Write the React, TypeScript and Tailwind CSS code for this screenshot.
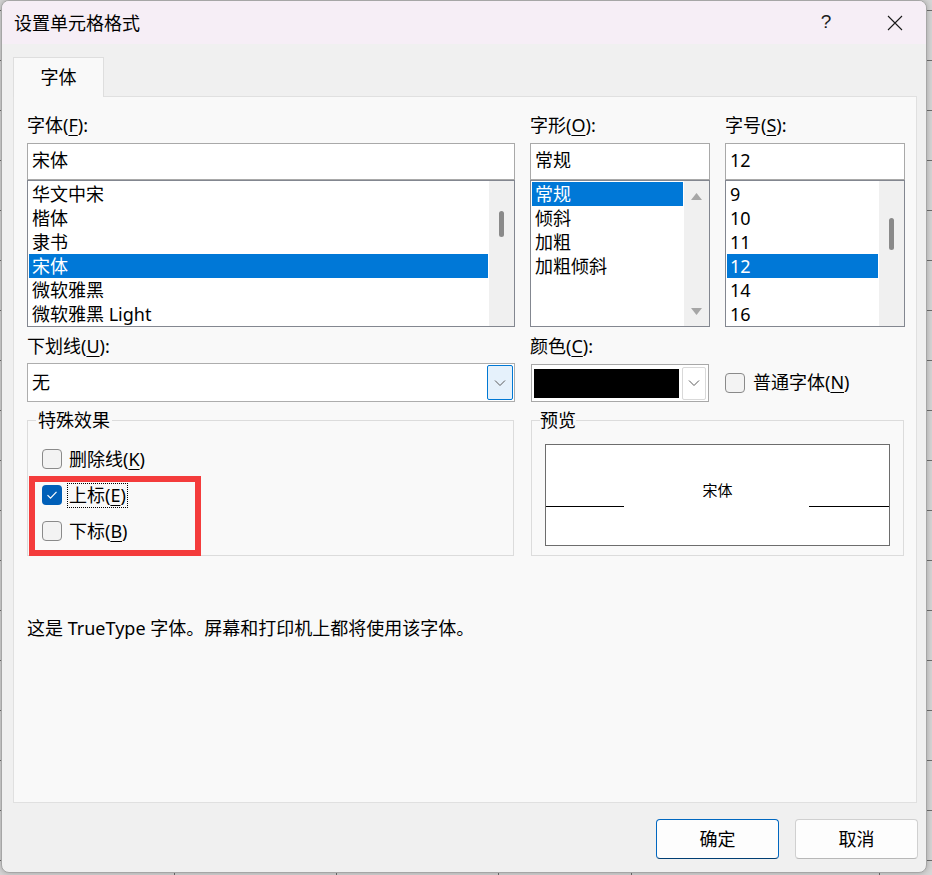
import React from 'react';

type ListProps = {
  items: string[];
  selected: number;
  thumb?: { top: string; height: string };
};

// worksheet grid behind the dialog
const gridCols = [174, 336, 498, 631, 879];
const gridRows = Array.from({ length: 18 }, (_, i) => 10 + i * 50);

const Chevron = () => (
  <svg width="12" height="8" viewBox="0 0 12 8" fill="none">
    <path d="M1 1.5l5 5 5-5" stroke="#5a5a5a" strokeWidth="1" />
  </svg>
);

const Check = ({ checked = false }: { checked?: boolean }) =>
  checked ? (
    <span className="flex h-[20px] w-[20px] shrink-0 items-center justify-center rounded-[4px] bg-[#005fb8]">
      <svg width="12" height="10" viewBox="0 0 12 10" fill="none">
        <path d="M1.5 5.2l3 3 6-6.4" stroke="#ffffff" strokeWidth="1.2" />
      </svg>
    </span>
  ) : (
    <span className="h-[20px] w-[20px] shrink-0 rounded-[4px] border border-[#8a8a8a] bg-[#f3f3f3]" />
  );

const Key = ({ k }: { k: string }) => (
  <>
    (<span className="underline decoration-1 underline-offset-[3px]">{k}</span>)
  </>
);

const ListBox: React.FC<ListProps> = ({ items, selected, thumb }) => (
  <div className="flex h-[147px] border border-[#838790] bg-white">
    <div className="flex-1 px-[1px] pt-[1px]">
      {items.map((item, i) => (
        <div
          key={item}
          className={
            i === selected
              ? 'h-[24px] bg-[#0078d7] pl-[3px] leading-[24px] text-white'
              : 'h-[24px] pl-[3px] leading-[24px] text-black'
          }
        >
          {item}
        </div>
      ))}
    </div>
    {thumb ? (
      <div className="flex w-[25px] justify-center bg-[#f0f0f0]">
        <div className={`w-[5px] rounded-full bg-[#8a8a8a] ${thumb.top} ${thumb.height}`} />
      </div>
    ) : (
      <div className="flex w-[25px] flex-col items-center justify-between bg-[#f0f0f0] pt-[12px] pb-[11px]">
        <svg width="11" height="7" viewBox="0 0 11 7">
          <path d="M0 7L5.5 0 11 7z" fill="#a6a6a6" />
        </svg>
        <svg width="11" height="7" viewBox="0 0 11 7">
          <path d="M0 0h11L5.5 7z" fill="#a6a6a6" />
        </svg>
      </div>
    )}
  </div>
);

export default function App() {
  return (
    <div className="relative h-[875px] w-[932px] overflow-hidden bg-[#d6d6d6] font-['Noto_Sans','Noto_Sans_CJK_SC',sans-serif] text-[18px] text-black">
      {gridCols.map(x => (
        <div key={`c${x}`} className="absolute top-0 h-full w-px bg-[#6e6e6e]" style={{ left: x }} />
      ))}
      {gridRows.map(y => (
        <div key={`r${y}`} className="absolute left-0 h-px w-full bg-[#6e6e6e]" style={{ top: y }} />
      ))}

      <div className="absolute top-0 left-[1px] flex h-[873px] w-[926px] flex-col overflow-hidden rounded-[8px] border border-[#a6a6a6] bg-[#f0f0f0] shadow-[0_0_6px_rgba(0,0,0,0.25)]">
        {/* title bar */}
        <div className="flex h-[43px] shrink-0 items-center bg-[#f6eef6] pl-[12px]">
          <span className="leading-[24px]">设置单元格格式</span>
          <div className="ml-auto flex items-center gap-[7px]">
            <span className="w-[62px] text-center font-['Liberation_Sans',sans-serif] text-[19px] font-light text-[#1c1c1c]">?</span>
            <span className="flex w-[62px] justify-center">
              <svg width="16" height="16" viewBox="0 0 16 16" fill="none">
                <path d="M1 1l14 14M15 1L1 15" stroke="#1a1a1a" strokeWidth="1.1" />
              </svg>
            </span>
          </div>
        </div>

        <div className="flex flex-1 flex-col pt-[13px] pr-[9px] pl-[11px]">
          {/* tab strip */}
          <div className="relative z-10 -mb-px flex h-[40px] w-[91px] items-center justify-center border-x border-t border-[#dedede] bg-[#f9f9f9]">
            字体
          </div>

          {/* font page */}
          <div className="relative h-[707px] border border-[#e0e0e0] bg-[#f9f9f9] pt-[16px] pl-[13px]">
            <div className="grid grid-cols-[488px_180px_180px] gap-x-[15px]">
              <div>
                <div className="h-[24px] leading-[24px]">字体<Key k="F" />:</div>
                <div className="mt-[6px] h-[37px] border border-[#a9a9a9] bg-white pl-[4px] leading-[33px]">宋体</div>
                <ListBox
                  items={['华文中宋', '楷体', '隶书', '宋体', '微软雅黑', '微软雅黑 Light']}
                  selected={3}
                  thumb={{ top: 'mt-[30px]', height: 'h-[26px]' }}
                />
              </div>
              <div>
                <div className="h-[24px] leading-[24px]">字形<Key k="O" />:</div>
                <div className="mt-[6px] h-[37px] border border-[#a9a9a9] bg-white pl-[4px] leading-[33px]">常规</div>
                <ListBox items={['常规', '倾斜', '加粗', '加粗倾斜']} selected={0} />
              </div>
              <div>
                <div className="h-[24px] leading-[24px]">字号<Key k="S" />:</div>
                <div className="mt-[6px] h-[37px] border border-[#a9a9a9] bg-white pl-[4px] leading-[33px]">12</div>
                <ListBox
                  items={['9', '10', '11', '12', '14', '16']}
                  selected={3}
                  thumb={{ top: 'mt-[37px]', height: 'h-[32px]' }}
                />
              </div>
            </div>

            <div className="mt-[7px] grid grid-cols-[488px_180px_180px] gap-x-[15px]">
              <div>
                <div className="h-[24px] leading-[24px]">下划线<Key k="U" />:</div>
                <div className="mt-[5px] flex h-[39px] items-center border border-[#adadad] bg-white pr-[1px] pl-[4px]">
                  <span className="flex-1">无</span>
                  <span className="flex h-[35px] w-[26px] items-center justify-center rounded-[2px] border border-[#0078d4] bg-[#e5f1fb]">
                    <Chevron />
                  </span>
                </div>
              </div>
              <div>
                <div className="h-[24px] leading-[24px]">颜色<Key k="C" />:</div>
                <div className="mt-[6px] ml-[1px] flex h-[38px] w-[178px] items-center gap-[3px] border border-[#a8a8a8] bg-white px-[2px]">
                  <span className="h-[29px] w-[146px] bg-black" />
                  <span className="flex h-[33px] w-[24px] items-center justify-center rounded-[2px] border border-[#d9d9d9] bg-white">
                    <Chevron />
                  </span>
                </div>
              </div>
              <div className="flex h-[68px] items-end">
                <div className="flex h-[39px] items-center gap-[8px]">
                  <Check />
                  <span>普通字体<Key k="N" /></span>
                </div>
              </div>
            </div>

            <div className="mt-[6px] flex">
              <fieldset className="h-[148px] w-[487px] border border-[#dcdcdc] px-[8px]">
                <legend className="px-[2px] leading-[24px]">特殊效果</legend>
                <div className="mt-[9px] ml-[6px] flex flex-col">
                  <div className="flex h-[36px] items-center gap-[6px]">
                    <Check />
                    <span className="px-[1px]">删除线<Key k="K" /></span>
                  </div>
                  <div className="flex h-[36px] items-center gap-[5px]">
                    <Check checked />
                    <span className="h-[25px] border border-dotted border-black px-[1px] leading-[23px]">上标<Key k="E" /></span>
                  </div>
                  <div className="flex h-[36px] items-center gap-[6px]">
                    <Check />
                    <span className="px-[1px]">下标<Key k="B" /></span>
                  </div>
                </div>
              </fieldset>

              <fieldset className="ml-[17px] h-[148px] w-[373px] border border-[#dcdcdc] px-[8px]">
                <legend className="leading-[24px]">预览</legend>
                <div className="mt-[12px] ml-[5px] flex h-[102px] w-[345px] flex-col border border-[#6d6d6d] bg-white">
                  <div className="mt-[34px] h-[22px] text-center text-[15px] leading-[22px]">宋体</div>
                  <div className="mt-[5px] flex justify-between">
                    <span className="w-[78px] border-t border-black" />
                    <span className="w-[80px] border-t border-black" />
                  </div>
                </div>
              </fieldset>
            </div>

            <div className="mt-[60px] leading-[24px]">这是 TrueType 字体。屏幕和打印机上都将使用该字体。</div>

            {/* red marker round the two script options */}
            <div className="absolute top-[379px] left-[15px] h-[80px] w-[172px] border-[6px] border-[#f43c3c]" />
          </div>

          <div className="mt-[16px] -mr-[1px] flex justify-end gap-[16px]">
            <button className="h-[40px] w-[123px] rounded-[4px] border border-[#0067c0] border-b-[#003e73] bg-[#fdfdfd]">确定</button>
            <button className="h-[40px] w-[123px] rounded-[4px] border border-[#d0d0d0] border-b-[#b8b8b8] bg-[#fdfdfd]">取消</button>
          </div>
        </div>
      </div>
    </div>
  );
}
